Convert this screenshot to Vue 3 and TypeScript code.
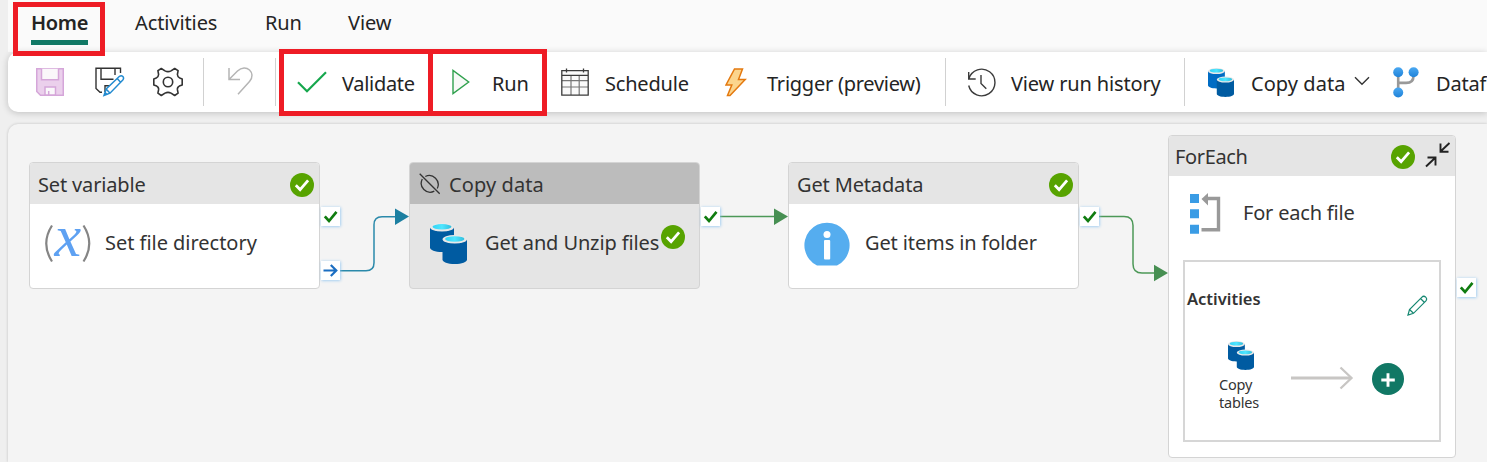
<script setup lang="ts">
interface Activity {
  id: string
  type: string
  name: string
  disabled?: boolean
  badge: 'header' | 'body'
}

const tabs: string[] = ['Home', 'Activities', 'Run', 'View']

const activities: Activity[] = [
  { id: 'variable', type: 'Set variable', name: 'Set file directory', badge: 'header' },
  { id: 'copy', type: 'Copy data', name: 'Get and Unzip files', disabled: true, badge: 'body' },
  { id: 'metadata', type: 'Get Metadata', name: 'Get items in folder', badge: 'header' },
]

const ports: string[] = ['variable-ok', 'copy-ok', 'metadata-ok', 'foreach-ok']
</script>

<template>
  <div class="app">
    <svg class="defs" width="0" height="0" aria-hidden="true">
      <defs>
        <linearGradient id="cyl-top" x1="0" x2="1" y1="0" y2="0">
          <stop offset="0" stop-color="#32d4f5" />
          <stop offset="0.5" stop-color="#50e6ff" />
          <stop offset="1" stop-color="#32bedd" />
        </linearGradient>
        <linearGradient id="dot" x1="0" x2="0" y1="0" y2="1">
          <stop offset="0" stop-color="#4aa8f2" />
          <stop offset="1" stop-color="#1f82d8" />
        </linearGradient>
        <symbol id="cylinders" viewBox="0 0 37 41" preserveAspectRatio="none">
          <path class="cyl-back" d="M0 4.500v20C0 27 5 29 12 29s12-2 12-4.500V4.500z" />
          <ellipse cx="12" cy="4.300" rx="12" ry="4.300" fill="#e8e8e8" />
          <ellipse cx="12" cy="3.800" rx="9.500" ry="2.700" fill="url(#cyl-top)" />
          <path d="M12.500 16.500v20c0 2.500 5 4.500 12.200 4.500S37 39 37 36.500v-20z" fill="#005ba1" />
          <ellipse cx="24.750" cy="16.300" rx="12.250" ry="4.300" fill="#e8e8e8" />
          <ellipse cx="24.750" cy="16" rx="9.700" ry="2.700" fill="url(#cyl-top)" />
        </symbol>
        <symbol id="success" viewBox="0 0 24 24">
          <circle cx="12" cy="12" r="12" fill="#57a300" />
          <path d="M5.800 12.300l4.300 4.300 8-9.200" fill="none" stroke="#fff" stroke-width="2.800" />
        </symbol>
      </defs>
    </svg>

    <nav class="tabs">
      <button v-for="(tab, i) in tabs" :key="tab" class="tab" :class="['tab-' + tab.toLowerCase(), { active: i === 0 }]">
        <span>{{ tab }}</span>
      </button>
    </nav>

    <div class="toolbar">
      <button class="tool save">
        <svg width="28" height="28" viewBox="0 0 28 28">
          <path d="M.75.75h26.500v26.500H4.500L.75 23.500z" fill="#ebd0ec" stroke="#d5a6d9" stroke-width="1.500" />
          <path d="M5.500.75v11h17v-11" fill="#faf7fa" stroke="#d5a6d9" stroke-width="1.500" />
          <path d="M9 27v-8h10.500v8z" fill="#faf7fa" stroke="#d5a6d9" stroke-width="1.500" />
          <path d="M12.700 27v-4" stroke="#d5a6d9" stroke-width="1.500" />
        </svg>
      </button>
      <button class="tool save-as">
        <svg width="30" height="30" viewBox="0 0 30 30">
          <path d="M7 25.300H5L1 21.500V1.200h24.500V6M6 1.200v11h12.500M20 1.200V8M10 25v-6.300h5" fill="none" stroke="#333" stroke-width="1.400" />
          <path d="M9 28.500l2.200-6.500L24.500 9.300c2.500-1.800 5.300 1.300 3.300 3.600L15 26.200zM11.200 22l3.800 4.200M22.200 11.500l3.600 3.900" fill="#fff" stroke="#238bd0" stroke-width="1.500" />
          <path d="M9 28.500l1.300-3.800 2.700 2.500z" fill="#238bd0" />
        </svg>
      </button>
      <button class="tool settings">
        <svg width="30" height="30" viewBox="0 0 30 30" fill="none" stroke="#333" stroke-width="1.600" stroke-linejoin="round">
          <path d="M8.300 1.500L12 3.900q3 1.500 6 0l3.700-2.400 3.400 2.200-.7 3.800q.2 2.800 2.300 3.500l2.500.9v6.200l-2.900 1q-2.200 1.200-1.900 3.600l.7 3.500-3.400 2.300L18 26.100q-3-1.500-6 0l-3.700 2.400-3.400-2.300.7-3.500q.3-2.400-1.900-3.600L.8 18.100v-6.200l2.500-.9q2.100-.7 2.300-3.500l-.7-3.800z" />
          <circle cx="15" cy="15" r="4.700" />
        </svg>
      </button>
      <i class="sep"></i>
      <button class="tool undo">
        <svg width="26" height="28" viewBox="0 0 26 28" fill="none" stroke="#b5b5b5" stroke-width="1.500">
          <path d="M1 1v11.500h11M1 12.500L9.500 4C18-4.300 29 6 21.500 14.500L10 27.200" />
        </svg>
      </button>
      <i class="sep"></i>
      <div class="marked validate-box">
        <button class="tool validate">
          <svg width="30" height="22" viewBox="0 0 30 22"><path d="M1 11.300l9 9L29 1.200" fill="none" stroke="#16a74d" stroke-width="2.200" /></svg>
          <span>Validate</span>
        </button>
      </div>
      <div class="marked run-box">
        <button class="tool run">
          <svg width="18" height="26" viewBox="0 0 18 26"><path d="M1 1.500v23L16.700 13z" fill="#f7f9f7" stroke="#30a14e" stroke-width="1.400" /></svg>
          <span>Run</span>
        </button>
      </div>
      <button class="tool schedule">
        <svg width="28" height="28" viewBox="0 0 28 28" fill="none">
          <path d="M.8 2.700h26.400v24.500H.8z" fill="#fafafa" />
          <path d="M1 12.700h26M1 19h26M10 7.500V27M18.200 7.500V27" stroke="#777" stroke-width="1.200" />
          <path d="M.8 2.700h26.400v24.500H.8zM.8 7.300h26.400M5.500.500v4M22.500.500v4" stroke="#3b3b3b" stroke-width="1.300" />
        </svg>
        <span>Schedule</span>
      </button>
      <button class="tool trigger">
        <svg width="22" height="29" viewBox="0 0 22 29"><path d="M9.500 1h8L13.500 11.500h6.700L5 27.500H2.500L6.800 17H1z" fill="#fbd58d" stroke="#e4790f" stroke-width="1.500" /></svg>
        <span>Trigger (preview)</span>
      </button>
      <i class="sep"></i>
      <button class="tool history">
        <svg width="29" height="29" viewBox="0 0 29 29" fill="none" stroke="#3b3b3b" stroke-width="1.400">
          <path d="M1.700 4v7h7M1.900 10.700A13.300 13.300 0 1 1 1.700 17.500M14 7v8.500l5.300 5.300" />
        </svg>
        <span>View run history</span>
      </button>
      <i class="sep"></i>
      <button class="tool copy">
        <svg class="bright" width="26" height="29"><use href="#cylinders" /></svg>
        <span>Copy data</span>
        <svg class="chevron" width="16" height="10" viewBox="0 0 16 10"><path d="M1 1.200l7 7 7-7" fill="none" stroke="#333" stroke-width="1.400" /></svg>
      </button>
      <button class="tool dataflow">
        <svg width="26" height="31" viewBox="0 0 26 31">
          <path d="M5.200 5v21M5.200 15.900h8q7.300 0 7.300-7V5" fill="none" stroke="#999" stroke-width="2.600" />
          <g fill="url(#dot)"><circle cx="5.200" cy="5.300" r="5" /><circle cx="20.600" cy="5.300" r="5" /><circle cx="5.200" cy="25.500" r="5" /></g>
        </svg>
        <span>Dataf</span>
      </button>
    </div>

    <main class="canvas">
      <svg class="wires" width="1479" height="338" viewBox="8 124 1479 338" fill="none">
        <g stroke="#2a89aa" stroke-width="1.500">
          <path d="M340 270.700h26q8 0 8-8v-38q0-8 8-8h14" />
          <path d="M395 208.500v16.500l14-8.500z" fill="#1c7fa1" stroke="none" />
        </g>
        <g stroke="#4c9857" stroke-width="1.500">
          <path d="M720 216.500h55M1099 216.500h25q9 0 9 9v38.500q0 9 9 9h13" />
          <path d="M774 208.500V225l14-8.500zM1154 264.700v16.500l14-8.200z" fill="#478f52" stroke="none" />
        </g>
      </svg>

      <section v-for="item in activities" :key="item.id" class="node" :class="['node-' + item.id, { disabled: item.disabled }]">
        <header>
          <svg v-if="item.disabled" class="off" width="22" height="22" viewBox="0 0 22 22" fill="none" stroke="#333" stroke-width="1.300">
            <path d="M.7.7l20 20M6.300 3.500A9 9 0 0 1 18.300 15.500M15.300 18.200A9 9 0 0 1 3.300 6" />
          </svg>
          <span class="title">{{ item.type }}</span>
          <svg v-if="item.badge === 'header'" class="badge" width="24" height="24"><use href="#success" /></svg>
        </header>
        <div class="node-body">
          <svg v-if="item.id === 'variable'" class="node-icon" width="48" height="44" viewBox="0 0 48 44" fill="none">
            <path d="M8 4.500Q-3.500 22.500 8 40.500M39.500 4.500Q51 22.500 39.500 40.500" stroke="#858585" stroke-width="2.200" />
            <text class="var-x" x="10.500" y="35.300">x</text>
          </svg>
          <svg v-else-if="item.id === 'copy'" class="node-icon" width="37" height="41"><use href="#cylinders" /></svg>
          <svg v-else class="node-icon" width="46" height="44" viewBox="0 0 46 44">
            <path d="M13 43.500a22.600 22.600 0 1 1 20 0z" fill="#55adef" />
            <circle cx="23" cy="12.500" r="3.500" fill="#fff" /><rect x="20" y="18" width="6.200" height="19.500" rx="1" fill="#fff" />
          </svg>
          <span class="title">{{ item.name }}</span>
          <svg v-if="item.badge === 'body'" class="badge" width="24" height="24"><use href="#success" /></svg>
        </div>
      </section>

      <section class="node node-foreach">
        <header>
          <span class="title">ForEach</span>
          <svg class="badge" width="24" height="24"><use href="#success" /></svg>
          <svg class="collapse" width="26" height="26" viewBox="0 0 26 26" fill="none" stroke="#222" stroke-width="1.900">
            <path d="M24.500 1L15.500 9.500M15.500 1.500v8.300h8M1 24.500l9.500-9M2.500 15.500h8v8" />
          </svg>
        </header>
        <div class="loop-row">
          <svg width="31" height="42" viewBox="0 0 31 42">
            <path d="M0 1h9v9H0zM0 16.300h9v9H0zM0 31.800h9v9H0z" fill="#3a9ce5" />
            <path d="M17 5.500h11.500v31.300H11.500" fill="none" stroke="#999" stroke-width="3.400" />
            <path d="M18 0v12.500L11.500 6z" fill="#999" />
          </svg>
          <span class="title">For each file</span>
        </div>
        <div class="inner">
          <div class="inner-head">
            <strong>Activities</strong>
            <svg width="21" height="21" viewBox="0 0 21 21" fill="none" stroke="#178872" stroke-width="1.200">
              <path d="M1 20l1.500-5.500L14.700 2.300c2.800-2.700 6.500 1 4 3.800L6.500 18.300zM2.500 14.500l4 3.800M13.500 3.500l4 4" />
            </svg>
          </div>
          <div class="flow">
            <div class="copy-tables">
              <svg width="26" height="29"><use href="#cylinders" /></svg>
              <span>Copy<br />tables</span>
            </div>
            <svg class="arrow" width="64" height="24" viewBox="0 0 64 24" fill="none" stroke="#c8c6c4"><path d="M1 12h60" stroke-width="2.800" /><path d="M50.500 1.500L61.500 12l-11 10.500" stroke-width="2.300" /></svg>
            <svg class="plus" width="32" height="32" viewBox="0 0 32 32"><circle cx="16" cy="16" r="16" fill="#117865" /><path d="M16 10.200v13.500M9.300 17h13.500" stroke="#fff" stroke-width="2.900" /></svg>
          </div>
        </div>
      </section>

      <span v-for="port in ports" :key="port" class="port" :class="port">
        <svg width="19" height="19" viewBox="0 0 19 19"><path d="M3.800 9.300l4.200 4.700L15.500 4.800" fill="none" stroke="#107c10" stroke-width="2.700" /></svg>
      </span>
      <span class="port variable-done">
        <svg width="19" height="19" viewBox="0 0 19 19" fill="none" stroke="#1b6ec2" stroke-width="2.200"><path d="M2.500 9.500h13M9.800 4l5.500 5.500-5.500 5.500" /></svg>
      </span>
    </main>

    <span class="highlight"></span>
  </div>
</template>

<style>
body {
  background: #efefef;
  overflow: hidden;
}
</style>

<style scoped>
.app {
  position: relative;
  box-sizing: border-box;
  width: 1487px;
  height: 462px;
  padding-left: 8px;
  overflow: hidden;
  background: #efefef;
  font-family: "Noto Sans", "Open Sans", sans-serif;
  font-size: 20px;
  color: #242424;
}
.defs { position: absolute; }
.cyl-back { fill: var(--cyl-back, #005ba1); }
.bright { --cyl-back: #006cc4; }
svg { display: block; flex: none; }
button {
  padding: 0;
  border: 0;
  background: none;
  font: inherit;
  color: inherit;
  letter-spacing: inherit;
  text-align: left;
}
span { white-space: nowrap; }

.tabs {
  display: flex;
  height: 52px;
  padding-left: 23px;
  background: #fafafa;
  letter-spacing: -0.1px;
}
.tab {
  display: flex;
  align-items: flex-start;
  box-sizing: border-box;
  flex: none;
  height: 45px;
  padding-top: 9px;
  line-height: 28px;
}
.tab span { display: block; }
.tab.active { font-weight: 600; letter-spacing: -0.3px; }
.tab.active span {
  width: 57px;
  height: 36px;
  box-sizing: border-box;
  border-bottom: 5px solid #117865;
}
.tab-home { width: 104px; }
.tab-activities { width: 130px; }
.tab-run { width: 83px; }

.toolbar {
  position: relative;
  display: flex;
  align-items: center;
  height: 60px;
  border-radius: 10px 0 0 10px;
  background: #fff;
  box-shadow: 0 1px 7px rgba(0, 0, 0, 0.2);
  letter-spacing: -0.2px;
}
.tool {
  display: flex;
  flex: none;
  align-items: center;
  height: 60px;
}
.tool span { line-height: 28px; padding-top: 3px; }
.sep { flex: none; width: 1px; height: 48px; background: #d1d1d1; }
.save { margin-left: 28px; width: 59px; }
.save-as { width: 58px; }
.settings { width: 50px; }
.undo { width: 47px; margin-left: 24px; }
.undo svg { margin-top: -2px; }
.marked {
  box-sizing: border-box;
  flex: none;
  display: flex;
  align-items: center;
  height: 67px;
  border: 5px solid #ee1c25;
}
.validate-box { width: 154px; margin-left: 3px; }
.run-box { width: 119px; margin-left: -5px; }
.validate { padding-left: 13px; gap: 15px; letter-spacing: -0.3px; }
.run { padding-left: 19px; gap: 22px; }
.schedule { width: 150px; margin-left: 14px; gap: 16px; }
.trigger { width: 220px; margin-left: 14px; gap: 20px; letter-spacing: -0.25px; }
.history { width: 217px; margin-left: 21px; gap: 15px; letter-spacing: -0.15px; }
.copy { width: 163px; margin-left: 23px; gap: 17px; letter-spacing: 0.050px; }
.copy .chevron { margin: -2px 0 0 -8px; }
.dataflow { margin-left: 22px; gap: 17px; }

.canvas {
  position: relative;
  height: 338px;
  margin-top: 12px;
  border-radius: 10px 0 0 0;
  background: #f4f4f4;
  box-shadow: 0 0 3px rgba(0, 0, 0, 0.2);
  color: #333;
}
.wires { position: absolute; left: 0; top: 0; }
.node {
  position: absolute;
  box-sizing: border-box;
  width: 291px;
  height: 127px;
  top: 38px;
  border: 1.500px solid #d4d4d4;
  border-radius: 4px;
  background: #fff;
  overflow: hidden;
}
.node-variable { left: 21px; }
.node-copy { left: 401px; }
.node-metadata { left: 780px; }
.node header {
  display: flex;
  align-items: center;
  box-sizing: border-box;
  height: 41px;
  padding: 2px 5px 0 8px;
  background: #e5e5e5;
  letter-spacing: -0.150px;
}
.title { line-height: 28px; }
.node header .badge { margin-left: auto; }
.off { margin: -2px 8px 0 1px; }
.node-copy header { letter-spacing: 0.1px; }
.node-body {
  display: flex;
  align-items: center;
  height: 78px;
  letter-spacing: -0.120px;
}
.node-variable .node-icon { margin-left: 14px; margin-right: 13px; overflow: visible; }
.node-variable .node-body { letter-spacing: -0.030px; }
.node-copy .node-icon { margin: 1px 18px 0 20px; }
.node-metadata .node-icon { margin-left: 15px; margin-right: 15px; margin-top: 1px; }
.node-body .badge { margin-left: 2px; margin-top: -13px; }
.var-x {
  font: italic 60px "Liberation Serif", serif;
  letter-spacing: 0;
  fill: #5ea1f2;
}
.node.disabled { background: #e5e5e5; }
.node.disabled header { background: #bcbcbc; }

.node-foreach { left: 1160px; top: 11px; width: 288px; height: 323px; }
.node-foreach header { height: 40px; padding: 1px 4px 0 6px; gap: 10px; letter-spacing: -0.350px; }
.collapse { margin-top: -3px; }
.loop-row {
  display: flex;
  align-items: center;
  gap: 22px;
  height: 73px;
  padding-left: 21px;
  letter-spacing: -0.2px;
}
.loop-row svg { margin-top: 2px; }
.inner {
  box-sizing: border-box;
  width: 258px;
  height: 182px;
  margin: 11px 0 0 14px;
  border: 2px solid #d6d6d6;
}
.inner-head {
  display: flex;
  align-items: flex-start;
  justify-content: space-between;
  height: 79px;
  box-sizing: border-box;
  padding: 25px 11px 0 2px;
}
.inner-head strong { font-size: 16.500px; font-weight: 600; line-height: 24px; }
.inner-head svg { margin-top: 8px; }
.flow { display: flex; align-items: flex-start; padding-left: 34px; }
.copy-tables { width: 71px; font-size: 14.500px; line-height: 18px; letter-spacing: -0.2px; }
.copy-tables svg { margin-left: 9px; }
.copy-tables span { display: block; margin-top: 5px; }
.arrow { margin-top: 25px; }
.plus { margin: 22px 0 0 18px; }

.port {
  position: absolute;
  width: 19px;
  height: 19px;
  background: #fff;
  box-shadow: 0 0 3px 0.500px #8dc3f0;
}
.variable-ok { left: 313px; top: 83px; }
.variable-done { left: 313px; top: 137px; }
.copy-ok { left: 693px; top: 83px; }
.metadata-ok { left: 1072px; top: 83px; }
.foreach-ok { left: 1449px; top: 154px; }

.highlight {
  position: absolute;
  left: 13px;
  top: 2px;
  box-sizing: border-box;
  width: 92px;
  height: 54px;
  border: 5px solid #ee1c25;
}
</style>
